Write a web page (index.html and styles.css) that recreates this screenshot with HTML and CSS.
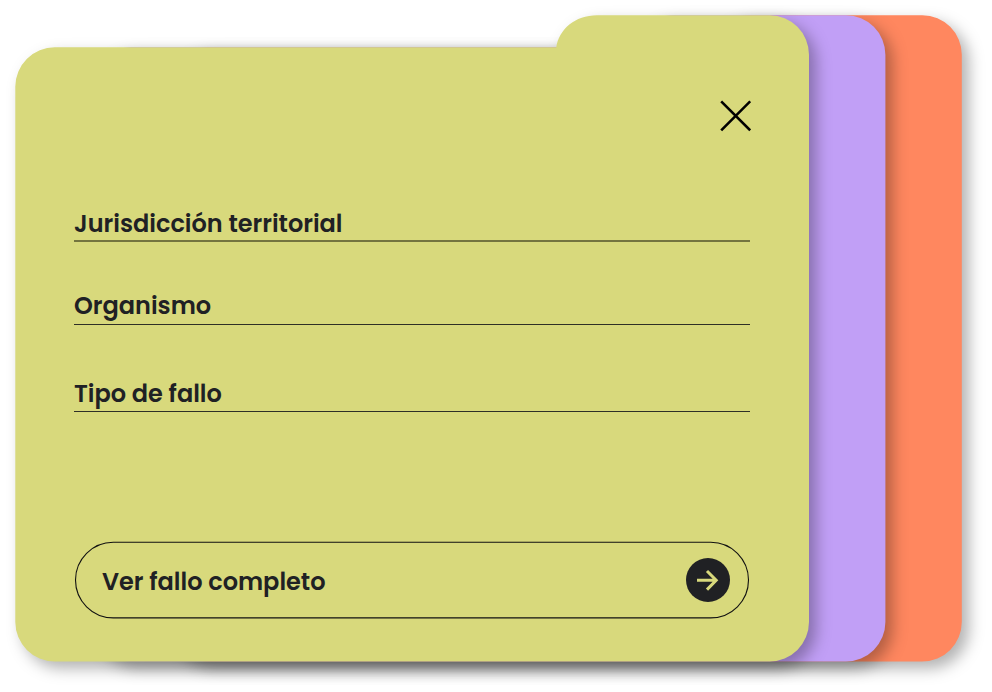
FILE: index.html
```html
<!DOCTYPE html>
<html lang="es">
<head>
<meta charset="utf-8">
<title>Ficha de fallo</title>
<link rel="stylesheet" href="styles.css">
</head>
<body>
<main class="stage">
  <svg class="folders" width="992" height="692" viewBox="0 0 992 692" aria-hidden="true">
    <defs>
      <path id="folder" d="M15.3 86.5A39.5 39.5 0 0 1 54.8 47.3H556.3C559 29.500 575 15.300 597 15.300H769.500A39.500 39.500 0 0 1 809 54.800V622A39.500 39.500 0 0 1 769.500 661.500H54.800A39.500 39.500 0 0 1 15.300 622Z"/>
    </defs>
    <use class="folder folder-orange" href="#folder" x="152.800"/>
    <use class="folder folder-purple" href="#folder" x="76.400"/>
    <use class="folder folder-green" href="#folder"/>
  </svg>
  <section class="card">
    <button class="close" aria-label="Cerrar">
      <svg width="32" height="32" viewBox="0 0 32 32"><path d="M2.200 1.300L31.200 30.300M31.200 1.300L2.200 30.300"/></svg>
    </button>
    <div class="fields">
      <div class="field field-territory"><span class="label">Jurisdicción territorial</span></div>
      <div class="field field-agency"><span class="label">Organismo</span></div>
      <div class="field field-type"><span class="label">Tipo de fallo</span></div>
    </div>
    <a class="action">
      <svg class="outline" width="676" height="78" viewBox="0 0 676 78"><rect x="1.500" y="1.300" width="673" height="75.600" rx="37.800"/></svg>
      <span class="label">Ver fallo completo</span>
      <svg class="arrow" width="44" height="44" viewBox="0 0 44 44"><circle cx="22" cy="22" r="22"/><path d="M11 22.300H30M21 13L30.200 22.300L21 31.600"/></svg>
    </a>
  </section>
</main>
</body>
</html>
```
FILE: styles.css
```css
* { box-sizing: border-box; }
body {
  margin: 0;
  background: #fff;
  font-family: Poppins, Inter, "Liberation Sans", sans-serif;
  color: #202124;
}
.stage { position: relative; width: 992px; height: 692px; overflow: hidden; }
.folders { position: absolute; inset: 0; }
.folder { filter: drop-shadow(7.600px 7.600px 7.600px rgba(0, 0, 0, .3)); }
.folder-orange { fill: #ff875f; }
.folder-purple { fill: #c19ff6; }
.folder-green { fill: #d8d97c; }
.card {
  position: relative;
  display: flex;
  flex-direction: column;
  width: 809px;
  height: 662px;
  padding: 100px 58px 43px 74px;
}
.close {
  align-self: flex-end;
  width: 32px;
  height: 32px;
  padding: 0;
  border: 0;
  background: none;
}
.close svg { display: block; }
.close path { fill: none; stroke: #000; stroke-width: 2.6; }
.fields { display: flex; flex-direction: column; margin-top: 76px; width: 676px; }
.field { display: flex; align-items: flex-start; padding-top: 1px; border-bottom: 1px solid #2f2f26; }
.field-territory { height: 34px; border-bottom: 2px solid #74743f; }
.field-agency { height: 35px; margin-top: 48px; }
.field-type { height: 34px; margin-top: 53px; }
.label { font-size: 24px; line-height: 30px; font-weight: 600; white-space: nowrap; }
.action {
  position: relative;
  display: flex;
  align-items: center;
  justify-content: space-between;
  width: 676px;
  height: 78px;
  margin-top: auto;
  padding: 0 20px 0 28px;
}
.action .label { padding-top: 4px; }
.outline { position: absolute; inset: 0; }
.outline rect { fill: none; stroke: #111; stroke-width: 1.1; }
.arrow circle { fill: #202124; }
.arrow path { fill: none; stroke: #d8d97c; stroke-width: 3; }
```
